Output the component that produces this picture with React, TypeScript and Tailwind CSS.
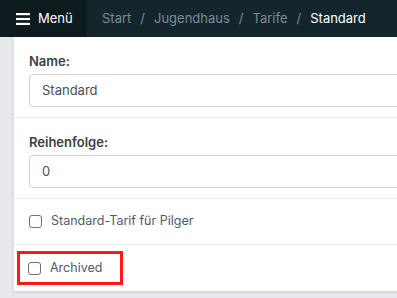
import React from "react";

const Check = ({ label }: { label: string }) => (
  <label className="flex items-center gap-[9px] text-[12.5px] text-[#555a5f]">
    <span className="w-[13px] h-[13px] rounded-[3px] border border-[#6b7075] bg-white" />
    {label}
  </label>
);

export default function App() {
  return (
    <div
      className="w-[397px] h-[298px] overflow-hidden bg-[#e8e9ec]"
      style={{ fontFamily: "Inter, 'Noto Sans', sans-serif" }}
    >
      <div className="flex h-[37px] bg-[#13262e] text-[13px]">
        <div className="flex items-center gap-2 w-[87px] pl-4 bg-[#0d1a1e] text-white">
          <svg width="14" height="12" viewBox="0 0 14 12">
            <rect x="0" y="0" width="14" height="2.2" fill="white" />
            <rect x="0" y="4.9" width="14" height="2.2" fill="white" />
            <rect x="0" y="9.8" width="14" height="2.2" fill="white" />
          </svg>
          Menü
        </div>
        <div className="flex items-center pl-[15px] gap-[9px] text-[#7d8d93]">
          <span>Start</span>
          <span>/</span>
          <span>Jugendhaus</span>
          <span>/</span>
          <span>Tarife</span>
          <span>/</span>
          <span className="text-white">Standard</span>
        </div>
      </div>
      <div className="ml-[13px] w-[420px] bg-white shadow-[0_1px_3px_rgba(0,0,0,0.12)] border-l border-[#e2e3e5]">
        <div className="px-[15px] pt-[16px] pb-[10px] border-b border-[#e8e9eb]">
          <div className="text-[13px] leading-4 font-semibold text-[#3c4043] mb-[5px]">Name:</div>
          <div className="h-[33px] flex items-center px-3 rounded-[4px] border border-[#cfd1d4] text-[13px] text-[#4a4f55]">
            Standard
          </div>
        </div>
        <div className="px-[15px] pt-[16px] pb-[10px] border-b border-[#e8e9eb]">
          <div className="text-[13px] leading-4 font-semibold text-[#3c4043] mb-[5px]">Reihenfolge:</div>
          <div className="h-[33px] flex items-center px-3 rounded-[4px] border border-[#cfd1d4] text-[13px] text-[#4a4f55]">
            0
          </div>
        </div>
        <div className="h-[46px] flex items-center px-[15px] border-b border-[#e8e9eb]">
          <Check label="Standard-Tarif für Pilger" />
        </div>
        <div className="h-[46px] flex items-center px-[3px]">
          <div className="flex items-center h-[34px] w-[106px] pl-[8px] border-[3px] border-[#ff1a1a]">
            <Check label="Archived" />
          </div>
        </div>
      </div>
    </div>
  );
}
